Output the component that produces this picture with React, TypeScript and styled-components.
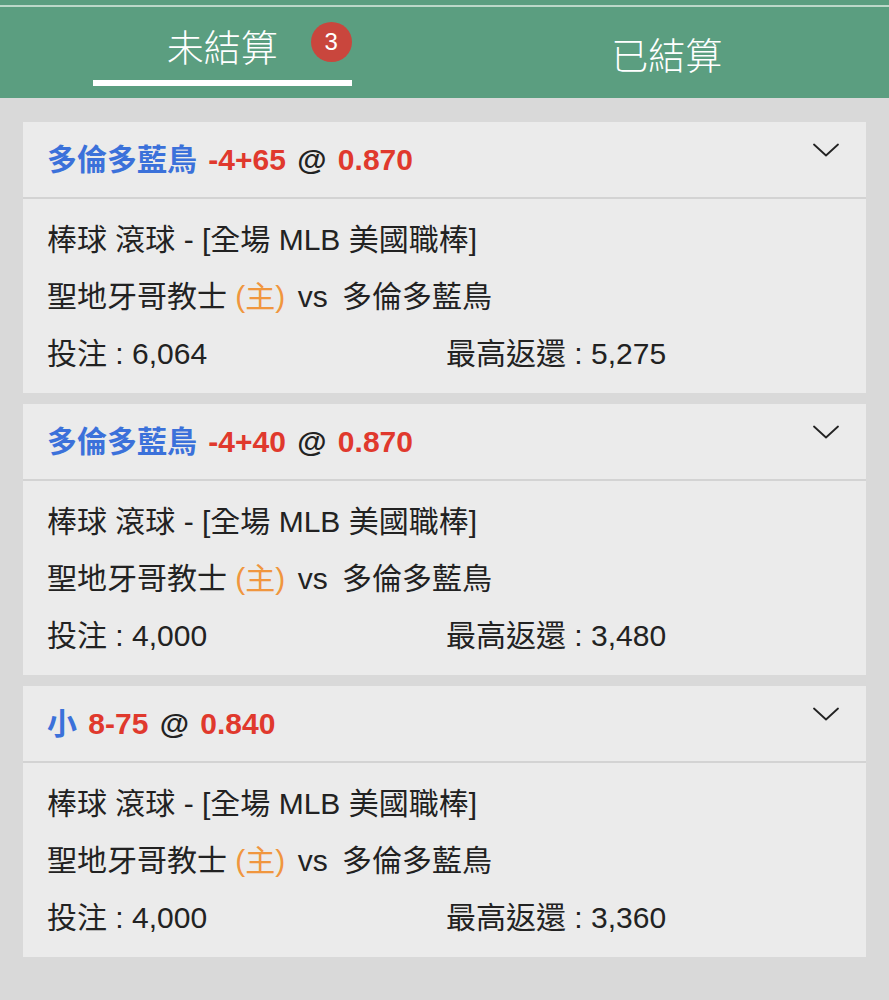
import styled, { createGlobalStyle } from "styled-components";

const GlobalStyle = createGlobalStyle`
  html, body {
    margin: 0;
    padding: 0;
    background: #d9d9d9;
  }
  body {
    font-family: "Liberation Sans", "Noto Sans CJK TC", sans-serif;
  }
`;

const Page = styled.div`
  width: 889px;
  min-height: 1000px;
  background: #d9d9d9;
`;

const Header = styled.header`
  background: #5b9e80;
  height: 98px;
  display: flex;
  flex-direction: column;
`;

const TopRule = styled.div`
  margin-top: 5px;
  height: 2px;
  background: #bcd8c9;
`;

const Tabs = styled.nav`
  flex: 1;
  display: flex;
`;

const Tab = styled.div<{ $active?: boolean }>`
  flex: 1;
  display: flex;
  flex-direction: column;
  align-items: center;
  padding-top: ${(p) => (p.$active ? "20px" : "28px")};
`;

const TabLabel = styled.span`
  position: relative;
  color: #fff;
  font-size: 37px;
  line-height: 38px;
  font-family: "Noto Sans CJK TC", sans-serif;
  font-weight: 300;
`;

const Underline = styled.div`
  width: 259px;
  height: 6px;
  margin-top: 15px;
  background: #fff;
`;

const Badge = styled.span`
  position: absolute;
  left: calc(100% + 33px);
  top: -5px;
  width: 41px;
  height: 40px;
  border-radius: 50%;
  background: #c9463d;
  color: #fff;
  font-family: "Liberation Sans", sans-serif;
  font-size: 24px;
  font-weight: 300;
  display: flex;
  align-items: center;
  justify-content: center;
`;

const List = styled.main`
  padding: 24px 23px 0;
  display: flex;
  flex-direction: column;
  gap: 11px;
`;

const Card = styled.section`
  background: #ebebeb;
`;

const CardHead = styled.div`
  height: 77px;
  box-sizing: border-box;
  border-bottom: 2px solid #d3d3d3;
  display: flex;
  align-items: center;
  padding: 0 27px 5px 24px;
`;

const Title = styled.div`
  flex: 1;
  font-size: 30px;
  font-weight: bold;
  word-spacing: 3px;
  color: #222;
  white-space: nowrap;
`;

const Blue = styled.span`
  color: #3b71da;
`;

const Red = styled.span`
  color: #e0392d;
`;

const Chevron = styled.svg`
  align-self: flex-start;
  margin-top: 21px;
  width: 26px;
  height: 14px;
`;

const CardBody = styled.div`
  padding: 12px 24px 11px;
  font-size: 30px;
  color: #222;
`;

const Line = styled.div`
  height: 57px;
  line-height: 57px;
  white-space: nowrap;
`;

const Home = styled.span`
  color: #f0963e;
  margin-right: 4px;
`;

const Vs = styled.span`
  margin-right: 6px;
`;

const StakeLine = styled(Line)`
  display: grid;
  grid-template-columns: 399px 1fr;
`;

type Bet = {
  pick: string;
  line: string;
  odds: string;
  stake: string;
  payout: string;
};

const bets: Bet[] = [
  { pick: "多倫多藍鳥", line: "-4+65", odds: "0.870", stake: "6,064", payout: "5,275" },
  { pick: "多倫多藍鳥", line: "-4+40", odds: "0.870", stake: "4,000", payout: "3,480" },
  { pick: "小", line: "8-75", odds: "0.840", stake: "4,000", payout: "3,360" },
];

const BetCard = ({ bet }: { bet: Bet }) => (
  <Card>
    <CardHead>
      <Title>
        <Blue>{bet.pick}</Blue> <Red>{bet.line}</Red> @ <Red>{bet.odds}</Red>
      </Title>
      <Chevron viewBox="0 0 26 14" fill="none">
        <path d="M1 1.5 L13 12.5 L25 1.5" stroke="#222" strokeWidth="1.8" strokeLinecap="round" strokeLinejoin="round" />
      </Chevron>
    </CardHead>
    <CardBody>
      <Line>棒球 滾球 - [全場 MLB 美國職棒]</Line>
      <Line>
        聖地牙哥教士 <Home>(主)</Home> <Vs>vs</Vs> 多倫多藍鳥
      </Line>
      <StakeLine>
        <span>投注 : {bet.stake}</span>
        <span>最高返還 : {bet.payout}</span>
      </StakeLine>
    </CardBody>
  </Card>
);

export default function App() {
  return (
    <Page>
      <GlobalStyle />
      <Header>
        <TopRule />
        <Tabs>
          <Tab $active>
            <TabLabel>
              未結算
              <Badge>3</Badge>
            </TabLabel>
            <Underline />
          </Tab>
          <Tab>
            <TabLabel>已結算</TabLabel>
          </Tab>
        </Tabs>
      </Header>
      <List>
        {bets.map((b, i) => (
          <BetCard key={i} bet={b} />
        ))}
      </List>
    </Page>
  );
}
